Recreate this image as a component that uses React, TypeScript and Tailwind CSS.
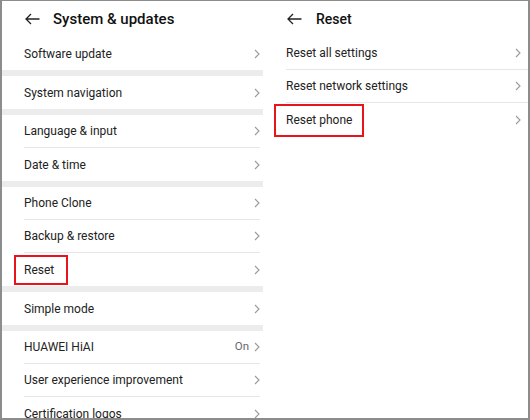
const font = { fontFamily: 'Roboto, "Liberation Sans", sans-serif' };

function Chevron() {
  return (
    <svg width="6" height="10" viewBox="0 0 6 10" className="shrink-0">
      <path d="M1 1 L5 5 L1 9" fill="none" stroke="#9a9a9a" strokeWidth="1.1" />
    </svg>
  );
}

function BackArrow() {
  return (
    <svg width="15" height="12" viewBox="0 0 15 12">
      <path d="M14.5 6 H1.2 M6 1 L1 6 L6 11" fill="none" stroke="#222" strokeWidth="1.3" />
    </svg>
  );
}

function Row({
  label,
  value,
  divider,
  boxed,
  right,
}: {
  label: string;
  value?: string;
  divider?: boolean;
  boxed?: boolean;
  right?: boolean;
}) {
  return (
    <div className={`h-[33px] shrink-0 flex flex-col ${right ? "pl-[21px]" : "pl-[22px] pr-[5px]"}`}>
      <div
        className={`flex-1 flex items-center justify-between ${right ? "pr-[7px]" : "pr-[0px]"} ${
          divider ? "border-b border-[#e6e6e6]" : ""
        }`}
      >
        <span className="relative text-[12px] text-[#222]">
          {label}
          {boxed && (
            <span
              className={`absolute border-2 border-[#e8141b] ${
                right ? "-left-[12px] -right-[12px] -top-[7px] -bottom-[8px]" : "-left-[10px] -right-[14px] -top-[6px] -bottom-[6px]"
              }`}
            />
          )}
        </span>
        <span className="flex items-center gap-[5px]">
          {value && <span className="text-[11.5px] text-[#666]">{value}</span>}
          <Chevron />
        </span>
      </div>
    </div>
  );
}

function Gap() {
  return <div className="h-[6px] shrink-0 bg-[#ececec] mr-[2px]" />;
}

export default function App() {
  return (
    <div
      className="w-[530px] h-[420px] overflow-hidden bg-white border-[#8c8c8c] border-l-2 border-t border-r-2 border-b-2 flex"
      style={font}
    >
      <div className="w-[263px] flex flex-col">
        <div className="h-[36px] flex items-center pl-[23px] gap-[13px] shrink-0">
          <BackArrow />
          <span className="text-[15px] font-medium text-[#111]">System &amp; updates</span>
        </div>
        <Row label="Software update" />
        <Gap />
        <Row label="System navigation" />
        <Gap />
        <Row label="Language & input" divider />
        <Row label="Date & time" />
        <Gap />
        <Row label="Phone Clone" divider />
        <Row label="Backup & restore" divider />
        <Row label="Reset" boxed />
        <Gap />
        <Row label="Simple mode" />
        <Gap />
        <Row label="HUAWEI HiAI" value="On" divider />
        <Row label="User experience improvement" divider />
        <Row label="Certification logos" />
      </div>
      <div className="flex-1 flex flex-col">
        <div className="h-[36px] flex items-center pl-[22px] gap-[14px] shrink-0">
          <BackArrow />
          <span className="text-[14px] font-medium text-[#111]">Reset</span>
        </div>
        <Row label="Reset all settings" divider right />
        <Row label="Reset network settings" divider right />
        <Row label="Reset phone" boxed right />
      </div>
    </div>
  );
}
